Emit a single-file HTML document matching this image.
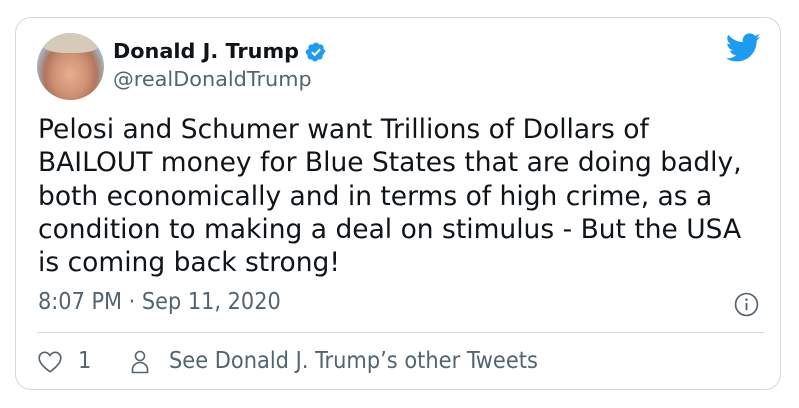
<!DOCTYPE html>
<html><head><meta charset="utf-8"><style>
body{margin:0;width:799px;height:408px;background:#fff;font-family:"DejaVu Sans","Liberation Sans",sans-serif;position:relative;overflow:hidden}
.card{position:absolute;left:15px;top:17px;width:766px;height:373px;border:1px solid #cfd9de;border-radius:16px;box-sizing:border-box}
.av{position:absolute;left:37px;top:33px;width:67px;height:67px;border-radius:50%;background:radial-gradient(ellipse at 50% 62%,#e6ae90 0%,#d09274 35%,#b07660 55%,#9ec8e0 78%,#b8d8ea 100%);overflow:hidden}
.hair{position:absolute;left:4px;top:-4px;width:60px;height:24px;background:#d6cbbb;border-radius:50% 50% 40% 40%}
.name{position:absolute;left:113px;top:39px;font-weight:bold;font-size:20.8px;color:#0f1419}
.handle{position:absolute;left:113px;top:67px;font-size:20.8px;color:#536471}
.txt{position:absolute;left:38px;top:113px;font-size:26.5px;line-height:33.3px;color:#0f1419;white-space:nowrap}
.time{position:absolute;left:38px;top:288px;font-size:23.2px;color:#536471;font-family:"DejaVu Sans Condensed","DejaVu Sans",sans-serif}
.div{position:absolute;left:37px;top:332px;width:727px;height:1px;background:#cfd9de}
.foot{position:absolute;top:347px;font-size:23.3px;color:#536471;font-family:"DejaVu Sans Condensed","DejaVu Sans",sans-serif}
</style></head><body>
<div class="card"></div>
<div class="av"><div class="hair"></div></div>
<div class="name">Donald J. Trump</div>
<svg style="position:absolute;left:305px;top:41px" width="22" height="22" viewBox="0 0 24 24"><path fill="#1d9bf0" d="M22.25 12c0-1.43-.88-2.67-2.19-3.34.46-1.39.2-2.9-.81-3.91s-2.52-1.27-3.91-.81c-.66-1.31-1.91-2.19-3.34-2.19s-2.67.88-3.33 2.19c-1.4-.46-2.91-.2-3.92.81s-1.26 2.52-.8 3.91C1.63 9.33.75 10.57.75 12s.88 2.67 2.19 3.34c-.46 1.39-.21 2.9.8 3.91s2.52 1.26 3.91.81c.67 1.31 1.91 2.19 3.34 2.19s2.68-.88 3.34-2.19c1.39.45 2.9.2 3.91-.81s1.27-2.52.81-3.91c1.31-.67 2.19-1.91 2.19-3.34z"/><path d="M7.5 12.2l3 3 6-6.2" stroke="#fff" stroke-width="2.2" fill="none"/></svg>
<div class="handle">@realDonaldTrump</div>
<svg style="position:absolute;left:726px;top:33px" width="35" height="30" viewBox="0 0 24 20"><path fill="#1d9bf0" d="M23.6 2.3c-.9.4-1.8.6-2.8.8 1-.6 1.8-1.6 2.1-2.7-.9.6-2 1-3.1 1.2C18.9.6 17.6 0 16.2 0c-2.7 0-4.8 2.2-4.8 4.8 0 .4 0 .8.1 1.1C7.4 5.7 3.9 3.8 1.6.9c-.4.7-.7 1.6-.7 2.4 0 1.7.9 3.2 2.2 4-.8 0-1.5-.2-2.2-.6v.1c0 2.3 1.7 4.3 3.9 4.7-.4.1-.8.2-1.3.2-.3 0-.6 0-.9-.1.6 1.9 2.4 3.3 4.5 3.4-1.7 1.3-3.7 2.1-6 2.1-.4 0-.8 0-1.2-.1 2.1 1.4 4.7 2.2 7.4 2.2 8.9 0 13.7-7.4 13.7-13.7v-.6c1-.7 1.8-1.6 2.4-2.6z"/></svg>
<div class="txt">Pelosi and Schumer want Trillions of Dollars of<br>BAILOUT money for Blue States that are doing badly,<br>both economically and in terms of high crime, as a<br>condition to making a deal on stimulus - But the USA<br>is coming back strong!</div>
<div class="time">8:07 PM · Sep 11, 2020</div>
<svg style="position:absolute;left:734px;top:292px" width="25" height="25" viewBox="0 0 24 24"><circle cx="12" cy="12" r="10.5" fill="none" stroke="#536471" stroke-width="1.6"/><circle cx="12" cy="7.3" r="1.2" fill="#536471"/><path d="M12 10.5v7" stroke="#536471" stroke-width="1.8"/></svg>
<div class="div"></div>
<svg style="position:absolute;left:37px;top:350px" width="26" height="24" viewBox="0 0 24 22"><path d="M12 20S2 13.5 2 7.3C2 4.3 4.3 2 7 2c2.2 0 3.9 1.3 5 3 1.1-1.7 2.8-3 5-3 2.7 0 5 2.3 5 5.3C22 13.5 12 20 12 20z" fill="none" stroke="#536471" stroke-width="1.5"/></svg>
<div class="foot" style="left:78px">1</div>
<svg style="position:absolute;left:130px;top:348px" width="20" height="28" viewBox="0 0 20 26"><circle cx="10" cy="7" r="4.5" fill="none" stroke="#536471" stroke-width="1.6"/><path d="M2.5 23.5v-3c0-4 3.5-7 7.5-7s7.5 3 7.5 7v3z" fill="none" stroke="#536471" stroke-width="1.6"/></svg>
<div class="foot" style="left:169px">See Donald J. Trump’s other Tweets</div>
</body></html>
